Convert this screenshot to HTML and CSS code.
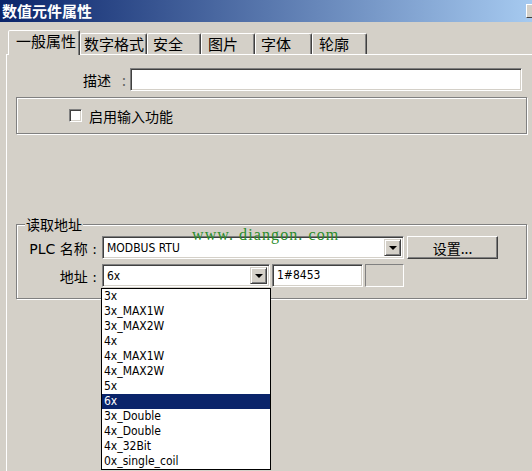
FILE: index.html
```html
<!DOCTYPE html>
<html lang="zh-CN">

<head>
    <meta charset="UTF-8">
    <meta name="viewport" content="width=device-width, initial-scale=1.0">
    <title>数值元件属性</title>
    <link rel="stylesheet" href="styles.css">
</head>

<body>
    <div class="window">
        <div class="titlebar">
            <span class="title">数值元件属性</span>
            <span class="close-btn"></span>
        </div>

        <div class="tabs">
            <div class="tab tab-general active">一般属性</div>
            <div class="tab tab-format">数字格式</div>
            <div class="tab tab-safety">安全</div>
            <div class="tab tab-picture">图片</div>
            <div class="tab tab-font">字体</div>
            <div class="tab tab-outline">轮廓</div>
        </div>

        <div class="panel">
            <div class="desc-row">
                <label class="desc-label">描述<span class="colon">:</span></label>
                <div class="field desc-input"></div>
            </div>

            <div class="group check-group">
                <span class="checkbox"></span>
                <span class="check-text">启用输入功能</span>
            </div>

            <div class="group address-group">
                <span class="group-title">读取地址</span>
                <div class="row">
                    <label class="row-label">PLC 名称 :</label>
                    <div class="combo combo-plc">
                        <span class="combo-text">MODBUS RTU</span>
                        <span class="combo-btn"></span>
                    </div>
                    <button class="btn">设置...</button>
                </div>
                <div class="row">
                    <label class="row-label">地址 :</label>
                    <div class="combo combo-addr">
                        <span class="combo-text">6x</span>
                        <span class="combo-btn"></span>
                        <ul class="dropdown">
                            <li>3x</li>
                            <li>3x_MAX1W</li>
                            <li>3x_MAX2W</li>
                            <li>4x</li>
                            <li>4x_MAX1W</li>
                            <li>4x_MAX2W</li>
                            <li>5x</li>
                            <li class="selected">6x</li>
                            <li>3x_Double</li>
                            <li>4x_Double</li>
                            <li>4x_32Bit</li>
                            <li>0x_single_coil</li>
                        </ul>
                    </div>
                    <div class="field addr-input">1#8453</div>
                    <div class="field addr-extra"></div>
                </div>
            </div>
        </div>

        <div class="watermark">www. diangon. com</div>
    </div>
</body>

</html>
```

FILE: styles.css
```css
html,
body {
    margin: 0;
    padding: 0;
    height: 471px;
    overflow: hidden;
}

body {
    background-color: #d4d0c8;
    font-family: "DejaVu Sans", "Noto Sans CJK SC", sans-serif;
    font-size: 14px;
    color: #000;
}

.window {
    position: relative;
    width: 532px;
    height: 471px;
}

/* title bar */
.titlebar {
    height: 22px;
    display: flex;
    align-items: center;
    justify-content: space-between;
    overflow: hidden;
    background: linear-gradient(to right, #0a246a, #a6caf0);
}

.title {
    padding-left: 2px;
    color: #fff;
    font-family: "Noto Sans CJK SC", sans-serif;
    font-weight: bold;
    font-size: 15px;
    line-height: 22px;
}

.close-btn {
    width: 16px;
    height: 14px;
    margin-right: -10px;
    box-sizing: border-box;
    background-color: #d4d0c8;
    border: 1px solid;
    border-color: #fff #404040 #404040 #fff;
}

/* tabs */
.tabs {
    position: relative;
    z-index: 1;
    display: flex;
    align-items: flex-end;
    height: 24px;
    margin-top: 8px;
    padding-left: 8px;
}

.tab {
    box-sizing: border-box;
    height: 21px;
    padding-left: 5px;
    border: 1px solid;
    border-bottom: none;
    border-color: #fff #404040 transparent #fff;
    border-radius: 2px 2px 0 0;
    box-shadow: inset -1px 0 #808080;
    font-family: "Noto Sans CJK SC", sans-serif;
    font-size: 15px;
    line-height: 19px;
}

.tab.active {
    height: 25px;
    margin-bottom: -1px;
    padding-left: 7px;
    background-color: #d4d0c8;
}

.tab-general { width: 72px; }
.tab-format { width: 67px; padding-left: 3px; }
.tab-safety { width: 54px; }
.tab-picture { width: 54px; padding-left: 6px; }
.tab-font { width: 57px; }
.tab-outline { width: 55px; padding-left: 6px; }

/* tab page */
.panel {
    height: 420px;
    margin-left: 6px;
    border-top: 1px solid #fff;
    border-left: 1px solid #fff;
}

.desc-row {
    display: flex;
    align-items: center;
    margin-top: 13px;
}

.desc-label {
    width: 123px;
    padding-left: 76px;
    box-sizing: border-box;
    font-family: "Noto Sans CJK SC", sans-serif;
    font-size: 14px;
}

.colon {
    margin-left: 11px;
    color: #606060;
}

.field {
    box-sizing: border-box;
    height: 23px;
    background-color: #fff;
    border: 1px solid;
    border-color: #808080 #fff #fff #808080;
    box-shadow: inset 1px 1px #404040, inset -1px -1px #d4d0c8;
}

.desc-input {
    width: 392px;
}

.group {
    box-sizing: border-box;
    margin: 0 5px 0 9px;
    border: 1px solid #808080;
    box-shadow: inset 1px 1px #fff, 1px 1px #fff;
}

.check-group {
    display: flex;
    align-items: center;
    height: 37px;
    margin-top: 6px;
    padding-left: 52px;
}

.checkbox {
    box-sizing: border-box;
    width: 13px;
    height: 13px;
    background-color: #fff;
    border: 1px solid;
    border-color: #808080 #fff #fff #808080;
    box-shadow: inset 1px 1px #404040, inset -1px -1px #d4d0c8;
}

.check-text {
    margin-left: 7px;
    font-family: "Noto Sans CJK SC", sans-serif;
    font-size: 14px;
}

.address-group {
    position: relative;
    margin-top: 90px;
    padding: 11px 0;
    display: flex;
    flex-direction: column;
    gap: 5px;
}

.group-title {
    position: absolute;
    top: -9px;
    left: 8px;
    padding: 0 1px;
    background-color: #d4d0c8;
    font-family: "Noto Sans CJK SC", sans-serif;
    font-size: 14px;
    line-height: 16px;
}

.row {
    display: flex;
    align-items: center;
    height: 23px;
}

.row-label {
    width: 80px;
    margin-right: 5px;
    text-align: right;
    font-size: 14px;
}

.combo {
    position: relative;
    display: flex;
    box-sizing: border-box;
    height: 23px;
    padding: 2px;
    background-color: #fff;
    border: 1px solid;
    border-color: #808080 #fff #fff #808080;
    box-shadow: inset 1px 1px #404040, inset -1px -1px #d4d0c8;
}

.combo-plc { width: 302px; }
.combo-addr { width: 168px; }

.combo-text {
    flex-grow: 1;
    padding-left: 2px;
    font-family: "DejaVu Sans Condensed", "DejaVu Sans", sans-serif;
    font-size: 12px;
    line-height: 19px;
}

.combo-btn {
    box-sizing: border-box;
    width: 17px;
    display: flex;
    align-items: center;
    justify-content: center;
    background-color: #d4d0c8;
    border: 1px solid;
    border-color: #d4d0c8 #404040 #404040 #d4d0c8;
    box-shadow: inset 1px 1px #fff, inset -1px -1px #808080;
}

.combo-btn::after {
    content: "";
    border-left: 4px solid transparent;
    border-right: 4px solid transparent;
    border-top: 4px solid #000;
}

.btn {
    box-sizing: border-box;
    width: 91px;
    height: 23px;
    margin-left: 3px;
    padding: 0;
    background-color: #d4d0c8;
    border: 1px solid;
    border-color: #fff #404040 #404040 #fff;
    box-shadow: inset -1px -1px #808080;
    font-family: "Noto Sans CJK SC", sans-serif;
    font-size: 14px;
    color: #000;
}

.addr-input {
    width: 91px;
    margin-left: 2px;
    padding-left: 4px;
    font-family: "DejaVu Sans Condensed", "DejaVu Sans", sans-serif;
    font-size: 12px;
    line-height: 21px;
}

.addr-extra {
    width: 39px;
    margin-left: 2px;
    background-color: #d4d0c8;
    box-shadow: inset 1px 1px #d4d0c8, inset -1px -1px #d4d0c8;
}

/* open dropdown list */
.dropdown {
    position: absolute;
    top: 23px;
    left: -2px;
    width: 170px;
    box-sizing: border-box;
    margin: 0;
    padding: 0;
    list-style: none;
    background-color: #fff;
    border: 1px solid #000;
    z-index: 2;
}

.dropdown li {
    height: 15px;
    padding-left: 2px;
    font-family: "DejaVu Sans Condensed", "DejaVu Sans", sans-serif;
    font-size: 12px;
    line-height: 15px;
}

.dropdown li.selected {
    background-color: #0a246a;
    color: #fff;
}

.watermark {
    position: absolute;
    top: 227px;
    left: 192px;
    z-index: 3;
    color: #2a8c2a;
    font-family: "Liberation Serif", serif;
    font-size: 16px;
    line-height: 16px;
    letter-spacing: 1.1px;
    white-space: nowrap;
}
```
